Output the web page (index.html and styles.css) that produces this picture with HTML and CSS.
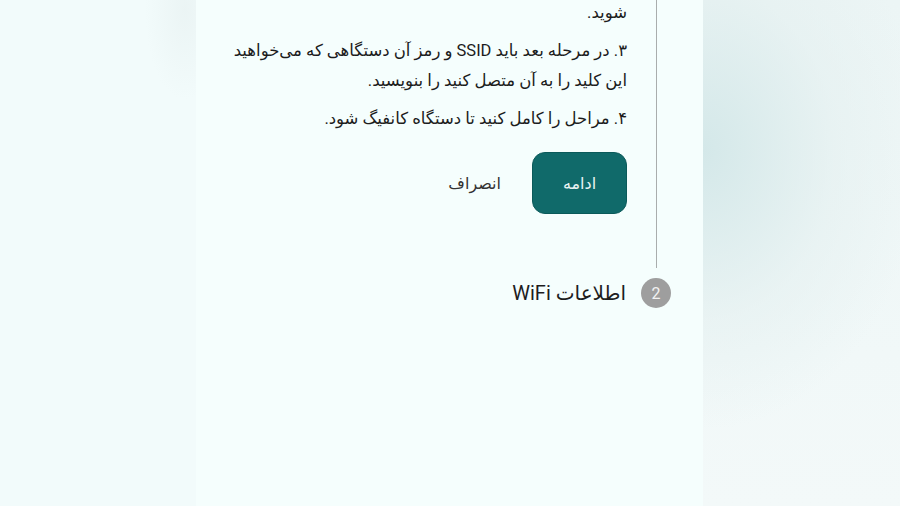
FILE: index.html
```html
<!DOCTYPE html>
<html lang="fa" dir="rtl">
<head>
    <meta charset="UTF-8">
    <title>کانفیگ دستگاه</title>
    <link rel="stylesheet" href="styles.css">
</head>
<body>
    <div class="side side-right"></div>

    <div class="page">
        <div class="stepper">
            <div class="step active">
                <div class="step-body">
                    <div class="guide">
                        <p>شوید.</p>
                        <p>۳. در مرحله بعد باید SSID و رمز آن دستگاهی که می‌خواهید این کلید را به آن متصل کنید را بنویسید.</p>
                        <p>۴. مراحل را کامل کنید تا دستگاه کانفیگ شود.</p>
                    </div>
                    <div class="actions">
                        <button class="btn btn-primary">ادامه</button>
                        <button class="btn btn-text">انصراف</button>
                    </div>
                </div>
            </div>

            <div class="step">
                <div class="step-head">
                    <span class="step-num">2</span>
                    <span class="step-title">اطلاعات WiFi</span>
                </div>
            </div>
        </div>
    </div>

    <div class="side side-left"></div>
</body>
</html>
```

FILE: styles.css
```css
body {
    margin: 0;
    height: 100vh;
    display: flex;
    overflow: hidden;
    background: #f4fbfb;
    font-family: Roboto, "DejaVu Sans", sans-serif;
    color: #222;
}

/* ستون‌های کناری */
.side {
    height: 100%;
}

.side-left {
    width: 196px;
    background:
        radial-gradient(ellipse 40px 90px at 185px 10px, rgba(226, 236, 236, 0.45), transparent),
        #f2fbfb;
}

.side-right {
    width: 197px;
    background:
        radial-gradient(ellipse 220px 280px at 0 150px, #d4e8e9, rgba(228, 240, 240, 0.6) 60%, transparent),
        linear-gradient(180deg, #ecf5f5, #f1f8f8 70%, #f3f9f9);
}

.page {
    width: 507px;
    height: 100%;
    background: #f5fefd;
}

/* استپر */
.stepper {
    margin-top: -2px;
}

.step-body {
    margin-right: 46px;
    border-right: 1.5px solid #a9adad;
    padding-right: 29px;
    padding-bottom: 54px;
}

.guide p {
    margin: 0 0 8px;
    width: 400px;
    font-size: 16.5px;
    line-height: 30px;
    color: #1c1c1c;
}

.actions {
    display: flex;
    align-items: center;
    gap: 16px;
    margin-top: 18px;
}

.btn {
    font-family: inherit;
    font-size: 16px;
    cursor: pointer;
}

.btn-primary {
    width: 95px;
    height: 62px;
    border: 1px solid #0b5a5a;
    border-radius: 13px;
    background: #106a6a;
    color: #e8f2f2;
}

.btn-text {
    border: none;
    background: none;
    padding: 10px 15px;
    color: #333;
}

.step-head {
    display: flex;
    align-items: center;
    gap: 15px;
    margin-top: 10px;
    padding-right: 32px;
}

.step-num {
    width: 30px;
    height: 30px;
    border-radius: 50%;
    background: #9e9e9e;
    color: #f2f2f2;
    font-size: 16px;
    display: flex;
    justify-content: center;
    align-items: center;
}

.step-title {
    font-size: 20px;
    color: #1d1d1d;
}
```
